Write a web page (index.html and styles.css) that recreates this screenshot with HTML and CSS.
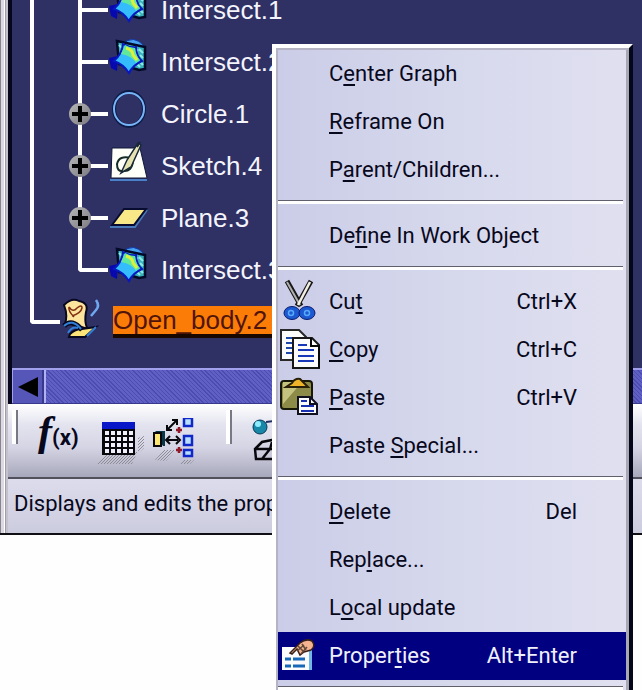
FILE: index.html
```
<!DOCTYPE html>
<html lang="en">
<head>
  <meta charset="UTF-8" />
  <meta name="viewport" content="width=device-width, initial-scale=1.0"/>
  <title>Open_body.2</title>
  <link rel="stylesheet" href="styles.css">
</head>
<body>

<svg class="sprite" aria-hidden="true">
  <symbol id="intersect" viewBox="0 0 42 52">
    <path d="M14 8Q26 -2 36 10L34 14L24 9Z" fill="#48a4f0" stroke="#1038b0"/>
    <path d="M9 5L37 11V33L31 34L11 28Z" fill="#38b0bc" stroke="#020a28" stroke-width="2.5"/>
    <path d="M11 9l3 3m1-4l3 3m8 0l4 4m1-2l4 4m-3 2l3 3m-5 2l5 5m-6-1l3 3" stroke="#8cece0" stroke-width="2"/>
    <path d="M1 22L10 20L9 35L3 32Z" fill="#0808b0"/>
    <path d="M6 25Q14 18 15 8Q22 12 28 11Q28 20 34 25Q25 29 21 37Q15 28 6 25Z" fill="#34bcfc" stroke="#0818c0" stroke-width="2"/>
    <path d="M17 9Q22 12 27 12Q28 20 32 24L28 27Q24 20 13 18Z" fill="#60e89c"/>
    <path d="M18 12Q25 14 25 19L29 24" fill="none" stroke="#dcf040" stroke-width="3"/>
  </symbol>
</svg>

<main class="window">
  <section class="pane">
    <ul class="tree">
      <li class="node">
        <span class="trunk"></span><span class="join"></span>
        <svg class="node-icon"><use href="#intersect"/></svg>
        <span class="label">Intersect.1</span>
      </li>
      <li class="node">
        <span class="trunk"></span><span class="join"></span>
        <svg class="node-icon"><use href="#intersect"/></svg>
        <span class="label">Intersect.2</span>
      </li>
      <li class="node">
        <span class="trunk"></span><span class="join"><button class="expand" aria-label="Expand Circle.1"></button></span>
        <svg class="node-icon" viewBox="0 0 42 52">
          <ellipse cx="21" cy="21" rx="15" ry="17" fill="none" stroke="#0c1c48" stroke-width="4"/>
          <ellipse cx="21" cy="21" rx="15" ry="16" fill="none" stroke="#78b4f8" stroke-width="2"/>
        </svg>
        <span class="label">Circle.1</span>
      </li>
      <li class="node">
        <span class="trunk"></span><span class="join"><button class="expand" aria-label="Expand Sketch.4"></button></span>
        <svg class="node-icon" viewBox="0 0 42 52">
          <path d="M2 40H39" stroke="#4a80c8" stroke-width="2"/>
          <path d="M4 8H32L39 38H3Z" fill="#fdfff8" stroke="#101838"/>
          <path d="M23 18Q11 15 9 24Q9 32 15 31Q24 32 25 21" fill="none" stroke="#142c28" stroke-width="2"/>
          <path d="M30 3L33 5L23 27L13 33L19 20Z" fill="#e8e4b0" stroke="#182838" stroke-width="1.5"/>
          <path d="M32 2L29 7" stroke="#182838" stroke-width="2"/>
        </svg>
        <span class="label">Sketch.4</span>
      </li>
      <li class="node">
        <span class="trunk"></span><span class="join"><button class="expand" aria-label="Expand Plane.3"></button></span>
        <svg class="node-icon" viewBox="0 0 42 52">
          <path d="M2 35H27L39 18" fill="none" stroke="#4878b8" stroke-width="2"/>
          <path d="M4 33L16 17H38L26 33Z" fill="#f8e888" stroke="#080c30" stroke-width="2"/>
        </svg>
        <span class="label">Plane.3</span>
      </li>
      <li class="node">
        <span class="trunk"></span><span class="join last"></span>
        <svg class="node-icon"><use href="#intersect"/></svg>
        <span class="label">Intersect.3</span>
      </li>
      <li class="node root">
        <span class="trunk last"></span>
        <svg class="node-icon" viewBox="0 0 42 52">
          <path d="M36 4Q40 10 36 14L31 20" fill="none" stroke="#70a8f0" stroke-width="2.5"/>
          <path d="M4 9Q12 1 19 5Q29 7 26 16Q24 28 28 33L18 30Q14 24 5 28Q8 19 4 9Z" fill="#fce49c" stroke="#080820" stroke-width="2"/>
          <path d="M9 11Q13 17 17 12Q22 8 22 12Q21 17 12 20M9 11Q8 15 14 21" fill="none" stroke="#803010" stroke-width="1.5"/>
          <path d="M10 38Q15 33 22 33L36 31L25 41H9Z" fill="#fce478" stroke="#080820" stroke-width="2"/>
          <path d="M4 30Q12 22 22 34" fill="none" stroke="#080820" stroke-width="5"/>
          <path d="M4 30Q12 22 21 33M8 37Q12 30 18 32M27 40L36 31" fill="none" stroke="#3080d8" stroke-width="2"/>
        </svg>
        <span class="label selected">Open_body.2</span>
      </li>
    </ul>
    <div class="scrollbar">
      <button class="scroll-left" aria-label="Scroll left">
        <svg width="20" height="20" viewBox="0 0 20 20"><path d="M0 10L20 0V20Z" fill="#000"/></svg>
      </button>
      <div class="track"></div>
    </div>
  </section>

  <div class="toolbar">
    <span class="grip"></span>
    <button class="tool formula" aria-label="Formula"><i>f</i><span>(x)</span></button>
    <button class="tool" aria-label="Design table">
      <svg width="52" height="48" viewBox="0 0 52 48">
        <defs>
          <pattern id="hatch" width="3" height="3" patternUnits="userSpaceOnUse"><path d="M0 3L3 0" stroke="#8c8c96"/></pattern>
        </defs>
        <path d="M1 46L12 34H42V20L48 18V30L40 37L36 46Z" fill="url(#hatch)"/>
        <path d="M6 4H39V37H6Z" fill="#08080c"/>
        <path d="M6 4H39V11H6Z" fill="#0818c8"/>
        <path d="M9 15H37M9 21H37M9 27H37M9 33H37" stroke="#f0f0fc" stroke-width="4" stroke-dasharray="4 2"/>
      </svg>
    </button>
    <button class="tool" aria-label="Knowledge inspector">
      <svg width="44" height="48" viewBox="0 0 44 48">
        <path d="M3 42L12 32H24L14 43ZM28 46L32 42H42L38 46Z" fill="url(#hatch)"/>
        <path d="M2 15L4 13H13V28H11Z" fill="#083848"/>
        <path d="M2 15H9V28H2Z" fill="#fce870" stroke="#08080c" stroke-width="2"/>
        <path d="M15 12L25 2M15 22H26M15 7V12H20M20 2H25V7M18 18L14 22L18 26M24 18L28 22L24 26" fill="none" stroke="#08080c" stroke-width="2"/>
        <path d="M32 0H40V8H32ZM32 18H40V27H32ZM32 32H40V38H32Z" fill="#b8e0fc" stroke="#1028c8" stroke-width="2.5"/>
        <path d="M27 9V15M24 12H30M27 29V35M24 32H30" stroke="#901828" stroke-width="2.5"/>
      </svg>
    </button>
    <span class="grip second"></span>
    <button class="tool catalog" aria-label="Catalog">
      <svg width="44" height="48" viewBox="0 0 44 48">
        <circle cx="8" cy="9" r="7" fill="#1888a8" stroke="#083858"/>
        <circle cx="6" cy="6" r="3" fill="#90ecfc"/>
        <path d="M3 31L10 24L30 20V41H4ZM4 31H30M10 41L18 31L20 24" fill="none" stroke="#08080c" stroke-width="2.5"/>
        <path d="M14 4L30 2" stroke="#203060" stroke-width="2"/>
      </svg>
    </button>
  </div>
  <footer class="status">Displays and edits the prope</footer>
</main>

<menu class="context">
  <li><button class="item"><span class="pic"></span><span>C<u>e</u>nter Graph</span></button></li>
  <li><button class="item"><span class="pic"></span><span><u>R</u>eframe On</span></button></li>
  <li><button class="item"><span class="pic"></span><span>P<u>a</u>rent/Children...</span></button></li>
  <li class="sep"></li>
  <li><button class="item"><span class="pic"></span><span>De<u>f</u>ine In Work Object</span></button></li>
  <li class="sep"></li>
  <li><button class="item">
    <svg class="pic" viewBox="0 0 51 48">
      <path d="M9 4L23 29M33 4L19 29" stroke="#181818" stroke-width="5"/>
      <path d="M9 5L22 28" stroke="#b0b0b0" stroke-width="2"/>
      <path d="M32 5L20 28" stroke="#f4f0e4" stroke-width="2.5"/>
      <ellipse cx="14" cy="36" rx="8" ry="6.5" fill="#1c58d0" stroke="#081c70"/>
      <ellipse cx="29" cy="36" rx="8" ry="6.5" fill="#1c58d0" stroke="#081c70"/>
      <circle cx="13" cy="36" r="2.5" fill="#1c58d0" stroke="#58a8fc" stroke-width="1.5"/>
      <circle cx="29" cy="36" r="2.5" fill="#1c58d0" stroke="#58a8fc" stroke-width="1.5"/>
    </svg>
    <span>Cu<u>t</u></span><kbd>Ctrl+X</kbd></button></li>
  <li><button class="item">
    <svg class="pic" viewBox="0 0 51 48">
      <path d="M3 5H21L28 12V35H3Z" fill="#fcfcfc" stroke="#282828" stroke-width="2"/>
      <path d="M8 13H16M8 18H16M8 23H16M8 28H16" stroke="#2048a8" stroke-width="2"/>
      <path d="M15 13H34L41 20V43H15Z" fill="#fcfcfc" stroke="#181818" stroke-width="2"/>
      <path d="M33 13V21H41V43" fill="none" stroke="#080808" stroke-width="2"/>
      <path d="M20 20H29M20 25H36M20 31H36M20 36H36" stroke="#1838b8" stroke-width="2"/>
    </svg>
    <span><u>C</u>opy</span><kbd>Ctrl+C</kbd></button></li>
  <li><button class="item">
    <svg class="pic" viewBox="0 0 51 48">
      <rect x="3" y="8" width="31" height="28" rx="3" fill="#8c8c48" stroke="#181808" stroke-width="2"/>
      <path d="M5 9H24L5 31Z" fill="#c4c480"/>
      <path d="M8 14L14 10Q17 5 22 6L28 12L30 14Z" fill="#f0b428" stroke="#282008" stroke-width="2"/>
      <path d="M20 24H32L39 31V41H20Z" fill="#fcfcfc" stroke="#101020" stroke-width="2"/>
      <path d="M32 24V31H39" fill="none" stroke="#101020" stroke-width="2"/>
      <path d="M23 28H29M23 33H36M23 38H36" stroke="#1830b0" stroke-width="2"/>
    </svg>
    <span><u>P</u>aste</span><kbd>Ctrl+V</kbd></button></li>
  <li><button class="item"><span class="pic"></span><span>Paste <u>S</u>pecial...</span></button></li>
  <li class="sep"></li>
  <li><button class="item"><span class="pic"></span><span><u>D</u>elete</span><kbd>Del</kbd></button></li>
  <li><button class="item"><span class="pic"></span><span>Rep<u>l</u>ace...</span></button></li>
  <li><button class="item"><span class="pic"></span><span>L<u>o</u>cal update</span></button></li>
  <li><button class="item active">
    <svg class="pic" viewBox="0 0 51 48">
      <path d="M4 16H31V39H4Z" fill="#fcfcfc"/>
      <path d="M31 16H34V39H31Z" fill="#70b8e8"/>
      <path d="M7 28H13M15 28H27M7 35H13M15 35H27" stroke="#1868b8" stroke-width="3"/>
      <path d="M12 22L22 12Q28 7 34 10Q38 15 33 19L26 21L22 24L19 18L14 23Z" fill="#f4b490" stroke="#382018" stroke-width="1.5"/>
      <path d="M20 15L26 21M24 13L28 19M19 20L26 14M23 23L29 16" stroke="#604838" stroke-width="1.5"/>
    </svg>
    <span>Proper<u>t</u>ies</span><kbd>Alt+Enter</kbd></button></li>
  <li class="sep"></li>
</menu>

</body>
</html>
```
FILE: styles.css
```
* {
  box-sizing: border-box;
}
body {
  margin: 0;
  height: 100vh;
  overflow: hidden;
  position: relative;
  background: #fefefe;
  font-family: Roboto, "Liberation Sans", sans-serif;
  font-size: 22px;
  color: #08081c;
}
button {
  margin: 0;
  padding: 0;
  border: 0;
  background: none;
  font: inherit;
  color: inherit;
}
ul, menu {
  margin: 0;
  padding: 0;
  list-style: none;
}
.sprite {
  display: none;
}

/* main window */
.window {
  padding-left: 8px;
  border-bottom: 2px solid #101014;
  background: linear-gradient(90deg, #88848c 0, #88848c 1px, #dcd8e4 1px, #dcd8e4 4px, #fff 4px, #fff 5px, #a09ca8 5px, #a09ca8 6px, #c4c0cc 6px);
}
.pane {
  overflow: hidden;
  border-left: 4px solid #06061c;
  background: #2f3064;
}
.tree {
  margin-top: -16px;
  padding: 0 0 20px 18px;
  font-family: "Liberation Sans", Arial, sans-serif;
  font-size: 26px;
  color: #f4f4fc;
}
.node {
  display: flex;
  align-items: center;
  height: 52px;
}
.trunk {
  width: 48px;
  height: 100%;
  border-left: 4px solid #fff;
}
.join {
  display: flex;
  align-items: center;
  width: 30px;
  height: 100%;
  background:
    linear-gradient(#fff, #fff) left / 4px 100% no-repeat,
    linear-gradient(#fff, #fff) center / 100% 4px no-repeat;
}
.trunk.last, .join.last {
  align-self: flex-start;
  height: 28px;
  background: none;
  border-left: 4px solid #fff;
  border-bottom: 4px solid #fff;
  border-bottom-left-radius: 4px;
}
.trunk.last {
  width: 30px;
}
.expand {
  width: 22px;
  height: 22px;
  margin-left: -9px;
  flex: none;
  border-radius: 50%;
  background:
    linear-gradient(#000, #000) center / 16px 4px no-repeat,
    linear-gradient(#000, #000) center / 4px 16px no-repeat,
    linear-gradient(135deg, #b8b8b8, #787880);
}
.node-icon {
  width: 42px;
  height: 52px;
  flex: none;
}
.label {
  margin-left: 11px;
  white-space: nowrap;
}
.selected {
  padding-right: 6px;
  border-bottom: 4px solid #180800;
  background: #fc7c08;
  color: #501408;
  line-height: 28px;
}

.scrollbar {
  display: flex;
  height: 36px;
  border-top: 2px solid #a0a0ec;
  border-bottom: 1px solid #38388c;
}
.scroll-left {
  display: flex;
  align-items: center;
  justify-content: center;
  width: 32px;
  border-left: 1px solid #a0a0ec;
  border-right: 2px solid #38388c;
  background: #5656b8;
}
.track {
  flex: 1;
  border-left: 2px solid #b0b0f4;
  background: repeating-linear-gradient(45deg, #4c4cb0 0, #4c4cb0 1px, #6060c4 1px, #6060c4 3px);
}

/* toolbar and status line */
.toolbar {
  display: flex;
  align-items: flex-start;
  height: 75px;
  padding: 6px 0 0 4px;
  overflow: hidden;
  border-bottom: 2px solid #50505c;
  background: linear-gradient(#fff 0, #e4e4f0 28%, #d4d4e4 60%, #a8a8bc 100%);
}
.grip {
  width: 6px;
  height: 34px;
  flex: none;
  border-right: 2px solid #787884;
  background: #fff;
}
.second {
  margin-left: 24px;
}
.tool {
  display: flex;
  flex: none;
  padding-top: 8px;
}
.formula {
  align-items: baseline;
  width: 56px;
  margin: -8px 4px 0 20px;
  font-weight: bold;
}
.formula i {
  font-family: "Liberation Serif", serif;
  font-size: 42px;
  line-height: 42px;
}
.formula span {
  font-size: 22px;
}
.tool + .tool {
  margin-left: -2px;
  margin-right: 6px;
}
.catalog {
  margin-left: 20px;
}
.status {
  height: 54px;
  padding-left: 6px;
  background: linear-gradient(#dcdcec, #ccccdf);
  line-height: 50px;
  white-space: nowrap;
  overflow: hidden;
}

/* context menu */
.context {
  position: absolute;
  top: 44px;
  left: 272px;
  right: 9px;
  padding: 2px 0 0 2px;
  border: 4px solid #fff;
  border-right: 4px solid #06061a;
  background: linear-gradient(90deg, #cbcde8, #d6d8ec 50%, #e0e0f0);
  box-shadow: inset 2px 2px 0 #b4b4c4, inset -3px 0 0 #a8a8b4;
}
.item {
  display: flex;
  align-items: center;
  width: calc(100% - 3px);
  height: 48px;
  padding: 0 49px 2px 0;
  white-space: nowrap;
}
.pic {
  width: 51px;
  height: 48px;
  flex: none;
}
.item kbd {
  margin-left: auto;
  font: inherit;
}
.item u {
  text-decoration-thickness: 2px;
  text-underline-offset: 3px;
  text-decoration-skip-ink: none;
}
.active {
  background: #000080;
  color: #f0f0fc;
}
.sep {
  height: 18px;
  padding-top: 6px;
}
.sep::before {
  content: "";
  display: block;
  height: 3px;
  margin-right: 6px;
  border-top: 1px solid #60606c;
  background: #fff;
}
```
